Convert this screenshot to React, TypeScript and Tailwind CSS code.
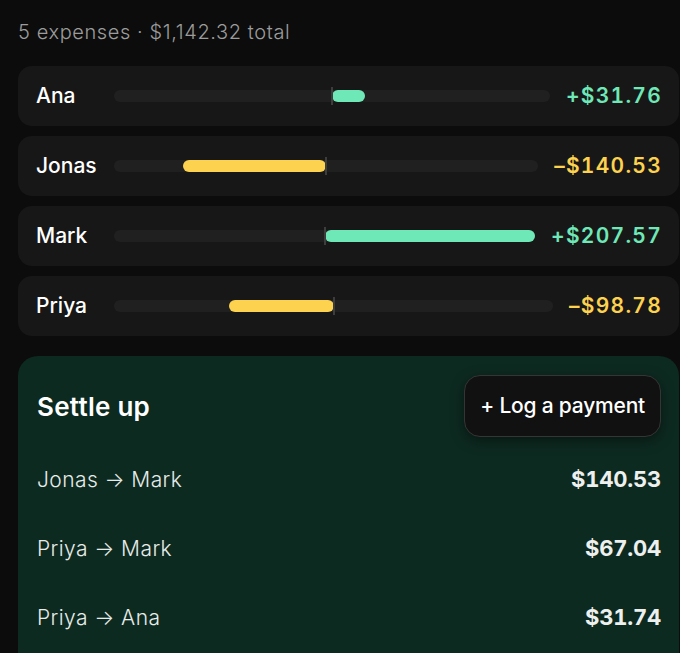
import React from "react";

type Balance = { name: string; amount: number };

const BALANCES: Balance[] = [
  { name: "Ana", amount: 31.76 },
  { name: "Jonas", amount: -140.53 },
  { name: "Mark", amount: 207.57 },
  { name: "Priya", amount: -98.78 },
];

const SETTLEMENTS = [
  { from: "Jonas", to: "Mark", amount: 140.53 },
  { from: "Priya", to: "Mark", amount: 67.04 },
  { from: "Priya", to: "Ana", amount: 31.74 },
];

const MAX = Math.max(...BALANCES.map((b) => Math.abs(b.amount)));

function fmt(n: number) {
  return "$" + Math.abs(n).toFixed(2);
}

function BalanceRow({ name, amount }: Balance) {
  const pct = (Math.abs(amount) / MAX) * 50;
  const positive = amount >= 0;
  return (
    <div className="flex h-[60px] items-center gap-4 rounded-[14px] bg-[#171717] pl-[18px] pr-[17px]">
      <span className="w-[62px] text-[21px] font-medium text-white">{name}</span>
      <div className="relative h-[12px] flex-1 rounded-full bg-[#202020]">
        <div
          className={
            positive
              ? "absolute top-0 h-full rounded-full bg-[#6fe8b8]"
              : "absolute top-0 h-full rounded-full bg-[#fdd24f]"
          }
          style={
            positive
              ? { left: "50%", width: `${pct}%` }
              : { right: "50%", width: `${pct}%` }
          }
        />
        <div className="absolute left-1/2 top-[-3px] h-[18px] w-[2px] -translate-x-1/2 bg-[#3d3d3d]" />
      </div>
      <span
        className={
          positive
            ? "text-[21px] font-semibold tracking-[0.06em] tabular-nums text-[#6fe8b8]"
            : "text-[21px] font-semibold tracking-[0.06em] tabular-nums text-[#fdd24f]"
        }
      >
        {positive ? "+" : "–"}
        {fmt(amount)}
      </span>
    </div>
  );
}

export default function App() {
  return (
    <div
      className="min-h-[653px] overflow-hidden bg-[#0c0c0c] pl-[18px] pr-[1px] pt-[17px] text-white"
      style={{ fontFamily: "Inter, 'Noto Sans', sans-serif" }}
    >
      <p className="text-[20px] font-light tracking-[0.03em] text-[#9c9c9c]">
        5 expenses · $1,142.32 total
      </p>
      <div className="mt-[19px] flex flex-col gap-[10px]">
        {BALANCES.map((b) => (
          <BalanceRow key={b.name} {...b} />
        ))}
      </div>
      <div className="mt-[20px] h-[320px] rounded-[20px] bg-[#0d2a21] pl-[19px] pr-[18px] pt-[19px]">
        <div className="flex items-center justify-between">
          <h2 className="text-[26px] font-semibold tracking-[0.01em]">Settle up</h2>
          <button
            type="button"
            className="h-[62px] rounded-[16px] border border-[#353535] bg-[#111111] px-[15px] text-[21px] font-medium tracking-[-0.01em] text-white shadow-[0_4px_14px_rgba(0,0,0,0.45)]"
          >
            + Log a payment
          </button>
        </div>
        <div className="mt-[8px] flex flex-col">
          {SETTLEMENTS.map((s) => (
            <div
              key={s.from + s.to}
              className="flex h-[69px] items-center justify-between"
            >
              <span className="text-[21px] font-light tracking-[0.02em] text-[#e8ece9]">
                {s.from} → {s.to}
              </span>
              <span className="text-[22px] font-bold tracking-[-0.01em] tabular-nums text-[#eef0ee]">
                {fmt(s.amount)}
              </span>
            </div>
          ))}
        </div>
      </div>
    </div>
  );
}
